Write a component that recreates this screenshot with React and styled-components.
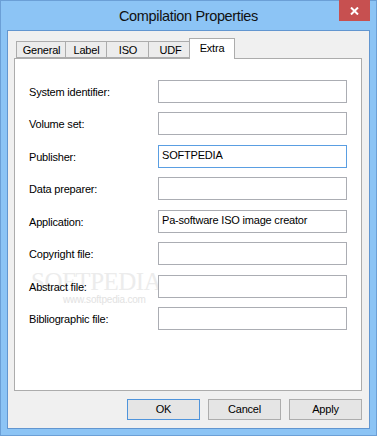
import React from "react";
import styled, { createGlobalStyle } from "styled-components";

const GlobalStyle = createGlobalStyle`
  html, body { margin: 0; padding: 0; background: #ffffff; }
  body { font-family: "Liberation Sans", Arial, sans-serif; }
  * { box-sizing: border-box; }
`;

const Window = styled.div`
  position: relative;
  width: 377px;
  height: 436px;
  background: #8cc4f5;
  border: 1px solid #6b9fd6;
  display: flex;
  flex-direction: column;
  padding: 0 6px 6px 6px;
`;

const TitleBar = styled.div`
  height: 29px;
  display: flex;
  align-items: center;
  justify-content: center;
  margin: 0 -6px;
`;

const Title = styled.div`
  font-family: "Liberation Sans", Arial, sans-serif;
  font-size: 14.5px;
  letter-spacing: -0.35px;
  color: #111;
  padding-top: 1px;
`;

const CloseButton = styled.div`
  position: absolute;
  top: -1px;
  right: 6px;
  width: 31px;
  height: 21px;
  background: #c75050;
  display: flex;
  align-items: center;
  justify-content: center;
`;

const Client = styled.div`
  flex: 1;
  background: #f0f0f0;
  border: 1px solid #6296d0;
  display: flex;
  flex-direction: column;
  padding: 7px 7px 0 6px;
`;

const TabStrip = styled.div`
  height: 20px;
  display: flex;
  align-items: flex-end;
  padding-left: 2px;
  position: relative;
  z-index: 1;
`;

const Tab = styled.div`
  width: ${(p) => p.$w}px;
  height: ${(p) => (p.$active ? 21 : 17)}px;
  margin-right: -1px;
  margin-left: ${(p) => (p.$active ? -2 : 0)}px;
  margin-bottom: ${(p) => (p.$active ? -1 : 0)}px;
  border: 1px solid #acacac;
  border-bottom: ${(p) => (p.$active ? "none" : "1px solid #acacac")};
  background: ${(p) => (p.$active ? "#ffffff" : "#ececec")};
  font-size: 11px;
  letter-spacing: -0.2px;
  color: #000;
  display: flex;
  justify-content: center;
  align-items: ${(p) => (p.$active ? "flex-start" : "center")};
  padding-top: ${(p) => (p.$active ? 3 : 0)}px;
  padding-left: ${(p) => (p.$active ? 0 : 1)}px;
  position: relative;
  z-index: ${(p) => (p.$active ? 2 : 1)};
  &:first-child { margin-left: 0; }
`;

const Panel = styled.div`
  position: relative;
  height: 333px;
  background: #ffffff;
  border: 1px solid #acacac;
  display: grid;
  grid-template-columns: 129px 189px;
  grid-auto-rows: 23px;
  row-gap: 9.45px;
  align-content: start;
  padding: 21px 14px 0 14px;
  overflow: hidden;
`;

const Label = styled.div`
  font-size: 11px;
  letter-spacing: -0.2px;
  color: #000;
  display: flex;
  align-items: center;
  padding-top: 1px;
  position: relative;
  z-index: 1;
`;

const Field = styled.input`
  width: 189px;
  height: 23px;
  border: 1px solid ${(p) => (p.$focused ? "#5a9ee2" : "#abadb3")};
  background: #ffffff;
  font-family: "Liberation Sans", Arial, sans-serif;
  font-size: 11px;
  letter-spacing: -0.2px;
  color: #000;
  padding: 0 0 2px 3px;
  margin: 0;
  outline: none;
  position: relative;
  z-index: 1;
`;

const Watermark = styled.div`
  position: absolute;
  left: 16px;
  top: 210px;
  font-family: "Liberation Serif", "Times New Roman", serif;
  font-size: 25px;
  line-height: 1;
  letter-spacing: -0.5px;
  color: #ececec;
  pointer-events: none;
  z-index: 0;
`;

const WatermarkUrl = styled.div`
  position: absolute;
  left: 48px;
  top: 236px;
  font-family: "Liberation Sans", Arial, sans-serif;
  font-size: 10px;
  line-height: 1;
  letter-spacing: -0.2px;
  color: #e2e2e2;
  pointer-events: none;
  z-index: 0;
`;

const ButtonRow = styled.div`
  display: flex;
  justify-content: flex-end;
  gap: 8px;
  padding: 8px 0 8px 0;
`;

const Button = styled.div`
  width: 73px;
  height: 21px;
  background: #e5e5e5;
  border: 1px solid ${(p) => (p.$default ? "#4f94db" : "#adadad")};
  font-size: 11px;
  letter-spacing: -0.2px;
  color: #000;
  display: flex;
  align-items: center;
  justify-content: center;
  padding-bottom: 1px;
`;

const tabs = [
  { label: "General", w: 50 },
  { label: "Label", w: 42 },
  { label: "ISO", w: 43 },
  { label: "UDF", w: 44 },
  { label: "Extra", w: 46, active: true },
];

const fields = [
  { label: "System identifier:", value: "" },
  { label: "Volume set:", value: "" },
  { label: "Publisher:", value: "SOFTPEDIA", focused: true },
  { label: "Data preparer:", value: "" },
  { label: "Application:", value: "Pa-software ISO image creator" },
  { label: "Copyright file:", value: "" },
  { label: "Abstract file:", value: "" },
  { label: "Bibliographic file:", value: "" },
];

export default function App() {
  return (
    <>
      <GlobalStyle />
      <Window>
        <TitleBar>
          <Title>Compilation Properties</Title>
        </TitleBar>
        <CloseButton>
          <svg width="9" height="8" viewBox="0 0 9 8">
            <path d="M1 0.5 L8 7.5 M8 0.5 L1 7.5" stroke="#ffffff" strokeWidth="2" />
          </svg>
        </CloseButton>
        <Client>
          <TabStrip>
            {tabs.map((t) => (
              <Tab key={t.label} $w={t.w} $active={t.active}>
                {t.label}
              </Tab>
            ))}
          </TabStrip>
          <Panel>
            <Watermark>SOFTPEDIA</Watermark>
            <WatermarkUrl>www.softpedia.com</WatermarkUrl>
            {fields.map((f) => (
              <React.Fragment key={f.label}>
                <Label>{f.label}</Label>
                <Field readOnly defaultValue={f.value} $focused={f.focused} />
              </React.Fragment>
            ))}
          </Panel>
          <ButtonRow>
            <Button $default>OK</Button>
            <Button>Cancel</Button>
            <Button>Apply</Button>
          </ButtonRow>
        </Client>
      </Window>
    </>
  );
}
